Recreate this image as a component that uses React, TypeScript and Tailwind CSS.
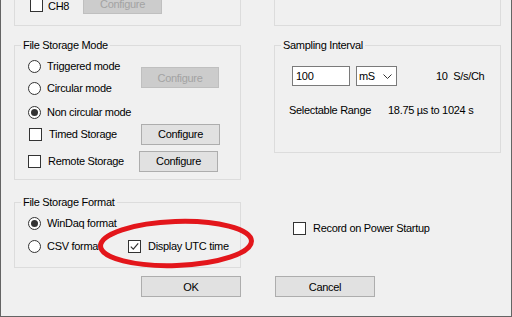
import type { ReactNode } from "react";

function CheckBox({ checked = false }: { checked?: boolean }) {
  return (
    <span className="w-[13px] h-[13px] shrink-0 border border-[#333333] bg-white flex items-center justify-center">
      {checked && (
        <svg width="11" height="11" viewBox="0 0 11 11">
          <path d="M1.8 5.6 L4.3 8.1 L9.2 2.4" stroke="#333333" strokeWidth="1.2" fill="none" />
        </svg>
      )}
    </span>
  );
}

function Radio({ checked = false }: { checked?: boolean }) {
  return (
    <span className="w-[13px] h-[13px] shrink-0 rounded-full border border-[#333333] bg-white flex items-center justify-center">
      {checked && <span className="w-[7px] h-[7px] rounded-full bg-[#333333]" />}
    </span>
  );
}

function Btn({ children, disabled = false, className = "" }: { children: ReactNode; disabled?: boolean; className?: string }) {
  return (
    <button
      disabled={disabled}
      className={
        "h-[21px] flex items-center justify-center border " +
        (disabled ? "bg-[#cccccc] border-[#bfbfbf] text-[#a3a3a3] " : "bg-[#e1e1e1] border-[#adadad] text-black ") +
        className
      }
    >
      {children}
    </button>
  );
}

function Group({ title, className = "", children }: { title: string; className?: string; children: ReactNode }) {
  return (
    <fieldset className={"border border-[#dcdcdc] " + className}>
      <legend className="ml-[6px] px-[2px] leading-[14px]">{title}</legend>
      {children}
    </fieldset>
  );
}

export default function App() {
  return (
    <div className="relative w-[512px] h-[317px] overflow-hidden bg-[#f0f0f0] border-l border-r border-b border-[#646464] text-[11px] leading-[14px] tracking-[-0.3px] text-black font-['Liberation_Sans',Arial,sans-serif]">
      <div className="pl-[13px] flex flex-col">
        {/* channel group and its neighbour, cut at the top */}
        <div className="grid grid-cols-[227px_227px] gap-x-[33px]">
          <div className="h-[26px] border-l border-r border-b border-[#dcdcdc] flex items-start pl-[15px]">
            <div className="-mt-[7px] flex items-start">
              <div className="w-[53px] h-[13px] mt-[6px] flex items-center gap-[5px]">
                <CheckBox />
                <span>CH8</span>
              </div>
              <Btn disabled className="w-[79px]">Configure</Btn>
            </div>
          </div>
          <div className="h-[26px] border-l border-r border-b border-[#dcdcdc]" />
        </div>

        <div className="mt-[12px] grid grid-cols-[227px_227px] gap-x-[33px] items-start">
          <Group title="File Storage Mode" className="h-[142px]">
            <div className="pl-[13px] flex flex-col">
              <div className="flex">
                <div className="w-[113px] flex flex-col">
                  <div className="mt-[3px] h-[22px] flex items-center gap-[6px]">
                    <Radio />
                    <span>Triggered mode</span>
                  </div>
                  <div className="h-[22px] flex items-center gap-[6px]">
                    <Radio />
                    <span>Circular mode</span>
                  </div>
                  <div className="mt-[2px] h-[22px] flex items-center gap-[6px]">
                    <Radio checked />
                    <span>Non circular mode</span>
                  </div>
                </div>
                <Btn disabled className="mt-[15px] w-[78px]">Configure</Btn>
              </div>
              <div className="h-[22px] flex items-center pl-[1px]">
                <div className="w-[112px] flex items-center gap-[7px]">
                  <CheckBox />
                  <span>Timed Storage</span>
                </div>
                <Btn className="w-[79px]">Configure</Btn>
              </div>
              <div className="mt-[5px] h-[22px] flex items-center">
                <div className="w-[111px] flex items-center gap-[7px]">
                  <CheckBox />
                  <span>Remote Storage</span>
                </div>
                <Btn className="w-[79px]">Configure</Btn>
              </div>
            </div>
          </Group>

          <Group title="Sampling Interval" className="h-[115px]">
            <div className="pl-[14px] pt-[14px] flex flex-col">
              <div className="ml-[3px] h-[20px] flex items-center">
                <div className="w-[58px] h-[20px] border border-[#7a7a7a] bg-white flex items-center pl-[3px]">100</div>
                <div className="ml-[6px] w-[41px] h-[20px] border border-[#7a7a7a] bg-white flex items-center pl-[2px]">
                  <span>mS</span>
                  <svg className="ml-auto mr-[4px]" width="9" height="5" viewBox="0 0 9 5">
                    <path d="M0.5 0.5 L4.5 4.5 L8.5 0.5" stroke="#333333" strokeWidth="1" fill="none" />
                  </svg>
                </div>
                <span className="ml-[39px] whitespace-pre">10  S/s/Ch</span>
              </div>
              <div className="mt-[17px] h-[14px] flex items-center">
                <span className="w-[99px]">Selectable Range</span>
                <span>18.75 µs to 1024 s</span>
              </div>
            </div>
          </Group>
        </div>

        <div className="grid grid-cols-[227px_227px] gap-x-[33px] items-start">
          <Group title="File Storage Format" className="mt-[15px] h-[73px]">
            <div className="pl-[13px] flex flex-col">
              <div className="mt-[3px] h-[22px] flex items-center gap-[6px]">
                <Radio checked />
                <span>WinDaq format</span>
              </div>
              <div className="mt-[1px] h-[22px] flex items-center">
                <div className="w-[100px] flex items-center gap-[6px]">
                  <Radio />
                  <span>CSV format</span>
                </div>
                <div className="flex items-center gap-[7px]">
                  <CheckBox checked />
                  <span>Display UTC time</span>
                </div>
              </div>
            </div>
          </Group>
          <div className="mt-[41px] pl-[19px] h-[14px] flex items-center gap-[7px]">
            <CheckBox />
            <span>Record on Power Startup</span>
          </div>
        </div>

        <div className="mt-[8px] pl-[127px] flex gap-[34px]">
          <Btn className="w-[100px]">OK</Btn>
          <Btn className="w-[100px]">Cancel</Btn>
        </div>
      </div>

      <svg className="absolute left-0 top-0 pointer-events-none" width="512" height="317">
        <ellipse cx="175" cy="243.5" rx="75.5" ry="22" fill="none" stroke="#e3161b" strokeWidth="5" transform="rotate(-2 175 243.5)" />
      </svg>
    </div>
  );
}
